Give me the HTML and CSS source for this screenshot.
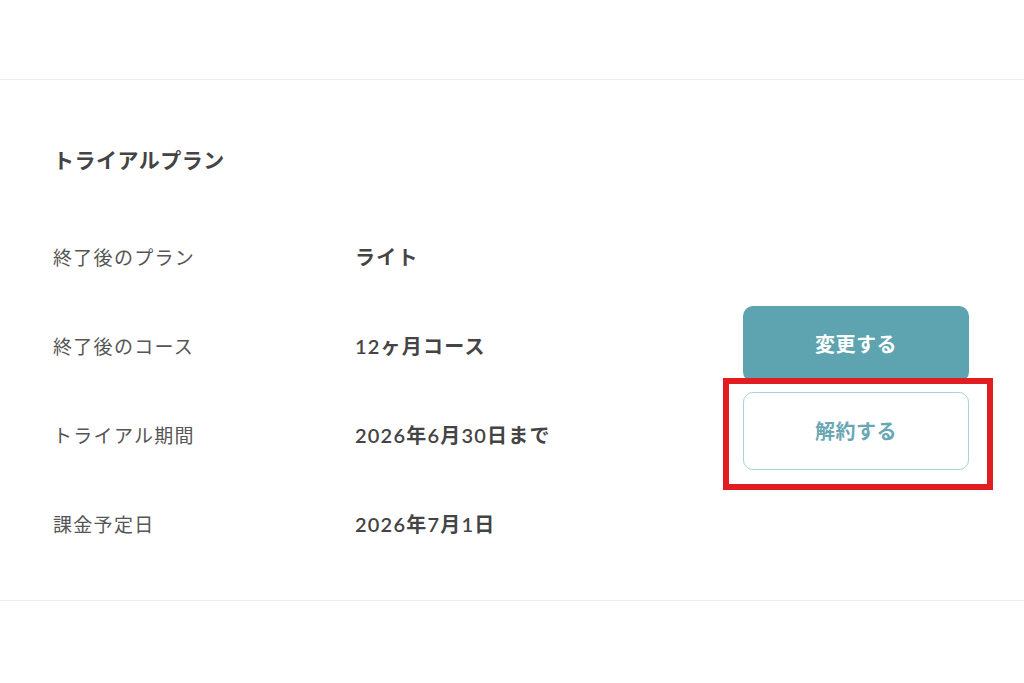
FILE: index.html
```html
<!DOCTYPE html>
<html lang="ja">
<head>
  <meta charset="UTF-8" />
  <meta name="viewport" content="width=device-width, initial-scale=1" />
  <title>トライアルプラン</title>
  <link rel="stylesheet" href="styles.css">
</head>
<body>
  <div class="top-space"></div>

  <section class="plan-card">
    <h2 class="plan-title">トライアルプラン</h2>

    <div class="plan-grid">
      <div class="plan-label">終了後のプラン</div>
      <div class="plan-value">ライト</div>
      <div class="plan-action"></div>

      <div class="plan-label">終了後のコース</div>
      <div class="plan-value">12ヶ月コース</div>
      <div class="plan-action">
        <button class="btn btn-change">変更する</button>
      </div>

      <div class="plan-label">トライアル期間</div>
      <div class="plan-value">2026年6月30日まで</div>
      <div class="plan-action">
        <div class="highlight-wrap">
          <button class="btn btn-cancel">解約する</button>
          <div class="highlight-box"></div>
        </div>
      </div>

      <div class="plan-label">課金予定日</div>
      <div class="plan-value">2026年7月1日</div>
      <div class="plan-action"></div>
    </div>
  </section>
</body>
</html>
```

FILE: styles.css
```css
body {
  margin: 0;
  background: #fff;
  font-family: Lato, "Noto Sans CJK JP", sans-serif;
  color: #333;
}

.top-space {
  height: 79px;
}

.plan-card {
  border-top: 1px solid #ececec;
  border-bottom: 1px solid #ececec;
  padding: 65px 55px 32px 53px;
}

.plan-title {
  margin: 0 0 37px 0;
  font-size: 21px;
  line-height: 30px;
  font-weight: bold;
  letter-spacing: 0.5px;
  color: #444;
}

.plan-grid {
  display: grid;
  grid-template-columns: 302px 1fr 226px;
  grid-auto-rows: 89px;
  align-items: center;
}

.plan-label {
  font-size: 19px;
  color: #555;
  letter-spacing: 1.3px;
}

.plan-value {
  font-size: 20px;
  font-weight: 600;
  letter-spacing: 1.2px;
  color: #444;
}

.plan-action {
  height: 100%;
  display: flex;
  align-items: center;
}

.btn {
  display: block;
  width: 100%;
  border-radius: 10px;
  font-family: Lato, "Noto Sans CJK JP", sans-serif;
  font-size: 20px;
  font-weight: 600;
  letter-spacing: 0.5px;
  cursor: pointer;
}

.btn-change {
  height: 76px;
  margin-bottom: 4px;
  background: #5ea3b0;
  color: #fff;
  border: none;
}

.highlight-wrap {
  position: relative;
  width: 100%;
  margin-bottom: 8px;
}

.btn-cancel {
  height: 78px;
  background: #fff;
  color: #6aa7b4;
  border: 1px solid #a8d2da;
}

.highlight-box {
  position: absolute;
  top: -14px;
  left: -20px;
  right: -24px;
  bottom: -20px;
  border: 6px solid #e21d22;
  pointer-events: none;
}
```
